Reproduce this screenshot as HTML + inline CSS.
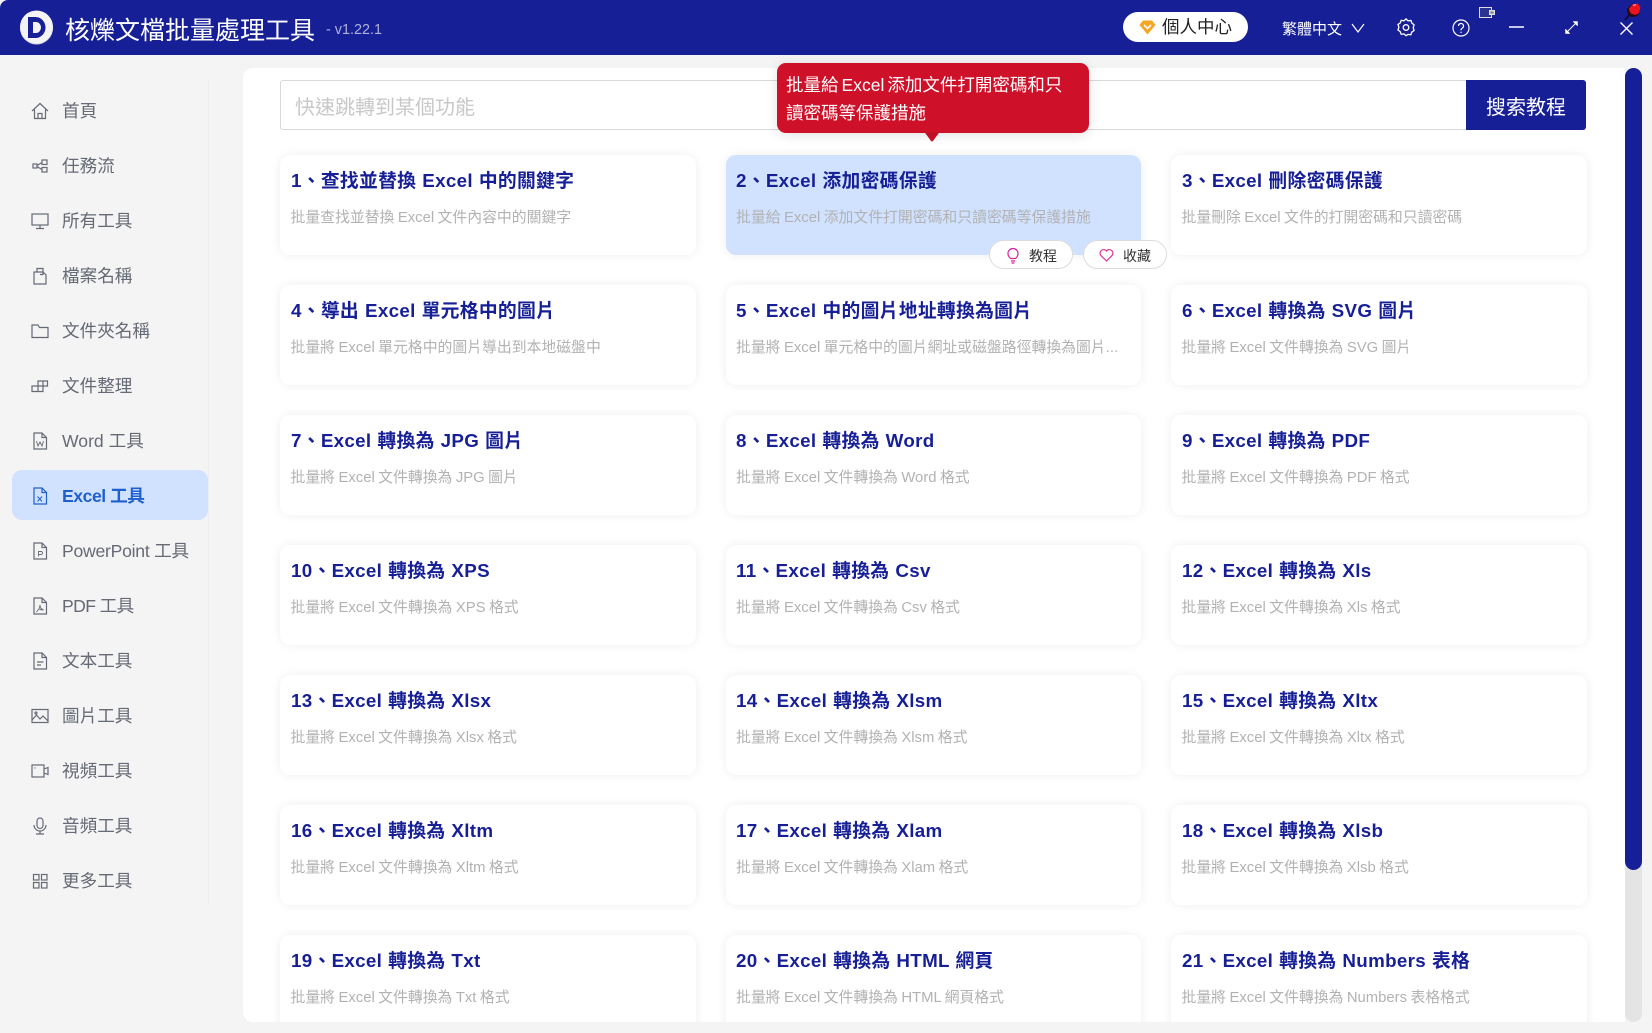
<!DOCTYPE html>
<html lang="zh-Hant"><head><meta charset="utf-8"><title>核爍文檔批量處理工具</title>
<style>
*{box-sizing:border-box;margin:0;padding:0}
html,body{width:1652px;height:1033px;overflow:hidden;background:#f4f4f4}
body{position:relative;font-family:"Liberation Sans","Noto Sans CJK TC",sans-serif}
.a{position:absolute;white-space:nowrap}
#hd{left:0;top:0;width:1652px;height:55px;background:#171f96;border-top-left-radius:8px}
.s{position:absolute;left:62px;height:50px;line-height:52px;font-size:17.6px;color:#666a75;white-space:nowrap}
.i{position:absolute;left:31px;width:18px;height:18px;margin-top:1px;fill:none;stroke:#666a75;stroke-width:1.2}
#act{position:absolute;left:12px;top:470px;width:196px;height:50px;background:#d0e2ff;border-radius:10px}
#panel{position:absolute;left:243px;top:68px;width:1382px;height:954px;background:#fff;border-radius:10px 0 0 10px;overflow:hidden}
.c{position:absolute;width:416px;height:100px;background:#fff;border-radius:10px;box-shadow:0 0 10px rgba(0,0,0,.07)}
.c b{position:absolute;left:11px;top:12px;line-height:28px;font-size:18.8px;font-weight:700;letter-spacing:.3px;word-spacing:.5px;color:#171f96;white-space:nowrap}
.c span{position:absolute;left:10.5px;top:51px;line-height:24px;font-size:14.85px;word-spacing:-.7px;color:#b2b2b2;white-space:nowrap}
.m{left:482.5px;width:415.5px}
.m b{left:10.5px}
.p{position:absolute;top:240px;height:29px;width:84px;background:#fff;border:1px solid #dcdcdc;border-radius:15px;font-size:14px;line-height:30px;color:#333}
.p span{position:absolute;left:39px;top:0}
</style></head><body>

<div class="a" id="hd"></div>
<svg class="a" style="left:20px;top:10px" width="34" height="35" viewBox="0 0 34 35"><circle cx="16.5" cy="18" r="16.5" fill="#d5d6e2"/><circle cx="16.5" cy="17" r="16.5" fill="#f3f3f6"/><path fill-rule="evenodd" d="M8 7h7.500a10 10.500 0 0 1 0 21H8zM13 12v11h3a5 5.500 0 0 0 0-11z" fill="#171f96"/></svg>
<div class="a" style="left:65px;top:14px;font-size:25px;line-height:35px;color:#fff">核爍文檔批量處理工具</div>
<div class="a" style="left:326px;top:20px;font-size:14.4px;line-height:21px;color:#aeb2d8">- v1.22.1</div>

<div class="a" style="left:1123px;top:12px;width:125px;height:30px;background:#fff;border-radius:15px"></div>
<svg class="a" style="left:1139px;top:20px" width="17" height="15" viewBox="0 0 17 15"><path d="M4 .5h9l3.5 4.5-8 9.5-8-9.5z" fill="#f5a623"/><path d="M5 5l3.5 3.5L12 5" fill="none" stroke="#fff" stroke-width="1.6"/></svg>
<div class="a" style="left:1162px;top:14px;font-size:17.5px;line-height:27px;color:#222">個人中心</div>
<div class="a" style="left:1282px;top:18px;font-size:15px;line-height:23px;color:#fff">繁體中文</div>
<svg class="a" style="left:1351px;top:23px" width="14" height="10" viewBox="0 0 14 10" fill="none" stroke="#fff" stroke-width="1.2"><path d="M1 1l6 8 6-8"/></svg>
<svg class="a" style="left:1397px;top:18px" width="18" height="19" viewBox="0 0 18 19" fill="none" stroke="#fff" stroke-width="1.3"><path d="M9 1.2l2 1.9 2.9-.3 1 2.6 2.2 1.8-.9 2.8.9 2.8-2.3 1.6-1 2.7-2.8-.4L9 18l-2-1.8-2.8.4-1-2.7L1 12.300l.9-2.800L1 6.700l2.200-1.400 1-2.600 2.800.4z" transform="translate(0 -.3)"/><circle cx="9" cy="9.500" r="2.800"/></svg>
<svg class="a" style="left:1452px;top:19px" width="18" height="18" viewBox="0 0 18 18" fill="none" stroke="#fff" stroke-width="1.2"><circle cx="9" cy="9" r="8"/><path d="M6.500 7a2.500 2.500 0 1 1 3.800 2.100C9.400 9.700 9 10.200 9 11.200"/><path d="M9 12.700v1.300"/></svg>
<svg class="a" style="left:1479px;top:7px" width="16" height="11" viewBox="0 0 16 11"><rect x=".5" y=".5" width="12" height="10" fill="#2b3390" stroke="#ddd"/><rect x="10" y="3" width="6" height="5" fill="#ddd"/><rect x="11.500" y="4.500" width="3" height="2" fill="#777"/></svg>
<div class="a" style="left:1509px;top:26px;width:15px;height:2px;background:#c6c9e6"></div>
<svg class="a" style="left:1564px;top:20px" width="15" height="15" viewBox="0 0 15 15" fill="#fff" stroke="#fff"><path d="M3 12l9-9" stroke-width="1"/><path d="M9 1.500h4.500V6zM1.500 9V13.500H6z" stroke-width=".5"/></svg>
<svg class="a" style="left:1620px;top:22px" width="13" height="13" viewBox="0 0 13 13" fill="none" stroke="#fff" stroke-width="1.400"><path d="M.5.500l12 12M12.500.500l-12 12"/></svg>
<svg class="a" style="left:1622px;top:1px" width="20" height="21" viewBox="0 0 20 21"><path d="M3 19l5-6" stroke="#0c0c20" stroke-width="1.600"/><path d="M5 8l4-4 8 1 1 7-4 3.500-5 .5-3.500-3z" fill="#2a0810"/><path d="M7 7.500l3.500-4 5.500-1 2.500 4-1.500 5.500-4 2-4-1.500-1.500-2.500z" fill="#ec1420"/><path d="M11 4.500l3-1" stroke="#ff9a9a" stroke-width="1.200"/></svg>

<div class="a" style="left:208px;top:80px;width:1px;height:825px;background:#eeeeee"></div>
<div id="act"></div>

<svg class="i" style="top:101px" viewBox="0 0 18 18"><path d="M1 9l8-7.500L17 9M3.500 7.500V16.500h11V7.500M7 16.500v-5h4v5"/></svg><div class="s" style="top:85px">首頁</div>
<svg class="i" style="top:156px" viewBox="0 0 18 18"><rect x="2" y="7" width="4" height="4"/><rect x="11" y="3" width="5" height="4.500"/><rect x="11" y="10.500" width="5" height="4.500"/><path d="M6 8.500l5-3M6 9.500l5 3"/></svg><div class="s" style="top:140px">任務流</div>
<svg class="i" style="top:211px" viewBox="0 0 18 18"><rect x="1" y="2" width="16" height="11"/><path d="M9 13v3M5 16.500h8"/></svg><div class="s" style="top:195px">所有工具</div>
<svg class="i" style="top:266px" viewBox="0 0 18 18"><path d="M3 5h9l3 3v9H3zM6 5V1.500h6v6H9"/></svg><div class="s" style="top:250px">檔案名稱</div>
<svg class="i" style="top:321px" viewBox="0 0 18 18"><path d="M1 3h6l1.500 2.500H17V15.500H1z"/></svg><div class="s" style="top:305px">文件夾名稱</div>
<svg class="i" style="top:376px" viewBox="0 0 18 18"><path d="M1 9h6v5.500H1zM7 14.500h5V9H7M7 9V4h9.500v5H12M12 4v5"/></svg><div class="s" style="top:360px">文件整理</div>
<svg class="i" style="top:431px" viewBox="0 0 18 18"><path d="M3 1h8l4.500 4.500V17H3zM11 1v4.500h4.500"/><path d="M5.500 9l1.500 5 2-4 2 4 1.500-5" stroke-width=".9"/></svg><div class="s" style="top:415px">Word 工具</div>
<svg class="i" style="top:486px;stroke:#2060cc" viewBox="0 0 18 18"><path d="M3 1h8l4.500 4.500V17H3zM11 1v4.500h4.500"/><path d="M6.500 9.500l4.500 5M11 9.500l-4.500 5" stroke-width="1"/></svg><div class="s" style="top:470px;color:#2060cc;font-weight:700;letter-spacing:-.45px">Excel 工具</div>
<svg class="i" style="top:541px" viewBox="0 0 18 18"><path d="M3 1h8l4.500 4.500V17H3zM11 1v4.500h4.500"/><path d="M7.500 14.500V9.500h2.500a1.500 1.500 0 0 1 0 3H7.500" stroke-width=".9"/></svg><div class="s" style="top:525px;letter-spacing:-.25px">PowerPoint 工具</div>
<svg class="i" style="top:596px" viewBox="0 0 18 18"><path d="M3 1h8l4.500 4.500V17H3zM11 1v4.500h4.500"/><path d="M5.500 15l3-4 .5-3 .5 3 3 2-4-.5" stroke-width=".9"/></svg><div class="s" style="top:580px;letter-spacing:-.6px">PDF 工具</div>
<svg class="i" style="top:651px" viewBox="0 0 18 18"><path d="M3 1h8l4.500 4.500V17H3zM11 1v4.500h4.500M6 10h6.500M6 13h4"/></svg><div class="s" style="top:635px">文本工具</div>
<svg class="i" style="top:706px" viewBox="0 0 18 18"><rect x="1" y="2.500" width="16" height="13"/><path d="M1 13l4.500-5 3.500 4 3-3 5 5"/><circle cx="5" cy="6" r="1"/></svg><div class="s" style="top:690px">圖片工具</div>
<svg class="i" style="top:761px" viewBox="0 0 18 18"><rect x="1" y="3" width="12" height="12"/><path d="M13 7l4-1.500v7L13 11"/><path d="M3.500 6h1"/></svg><div class="s" style="top:745px">視頻工具</div>
<svg class="i" style="top:816px" viewBox="0 0 18 18"><rect x="6" y="1" width="6" height="10.500" rx="3"/><path d="M3 8a6 6 0 0 0 12 0M9 14v3M5 17h8"/></svg><div class="s" style="top:800px">音頻工具</div>
<svg class="i" style="top:871px" viewBox="0 0 18 18"><rect x="2.500" y="2.500" width="5.500" height="5.500"/><rect x="10.500" y="2.500" width="5.500" height="5.500"/><rect x="2.500" y="10.500" width="5.500" height="5.500"/><rect x="10.500" y="10.500" width="5.500" height="5.500"/></svg><div class="s" style="top:855px">更多工具</div>

<div id="panel">
<div class="a" style="left:37px;top:12px;width:1190px;height:50px;border:1px solid #d9d9d9;border-right:0;border-radius:3px 0 0 3px;padding-left:14px;line-height:54px;font-size:20px;color:#c8c8c8">快速跳轉到某個功能</div>
<div class="a" style="left:1223px;top:12px;width:120px;height:50px;background:#171f96;border-radius:0 3px 3px 0;text-align:center;line-height:56px;font-size:20px;color:#fff">搜索教程</div>

<div class="c" style="left:37px;top:87px"><b>1、查找並替換 Excel 中的關鍵字</b><span>批量查找並替換 Excel 文件內容中的關鍵字</span></div>
<div class="c m" style="top:87px;background:#d0e2ff"><b>2、Excel 添加密碼保護</b><span>批量給 Excel 添加文件打開密碼和只讀密碼等保護措施</span></div>
<div class="c" style="left:928px;top:87px"><b>3、Excel 刪除密碼保護</b><span>批量刪除 Excel 文件的打開密碼和只讀密碼</span></div>
<div class="c" style="left:37px;top:217px"><b>4、導出 Excel 單元格中的圖片</b><span>批量將 Excel 單元格中的圖片導出到本地磁盤中</span></div>
<div class="c m" style="top:217px"><b>5、Excel 中的圖片地址轉換為圖片</b><span>批量將 Excel 單元格中的圖片網址或磁盤路徑轉換為圖片...</span></div>
<div class="c" style="left:928px;top:217px"><b>6、Excel 轉換為 SVG 圖片</b><span>批量將 Excel 文件轉換為 SVG 圖片</span></div>
<div class="c" style="left:37px;top:347px"><b>7、Excel 轉換為 JPG 圖片</b><span>批量將 Excel 文件轉換為 JPG 圖片</span></div>
<div class="c m" style="top:347px"><b>8、Excel 轉換為 Word</b><span>批量將 Excel 文件轉換為 Word 格式</span></div>
<div class="c" style="left:928px;top:347px"><b>9、Excel 轉換為 PDF</b><span>批量將 Excel 文件轉換為 PDF 格式</span></div>
<div class="c" style="left:37px;top:477px"><b>10、Excel 轉換為 XPS</b><span>批量將 Excel 文件轉換為 XPS 格式</span></div>
<div class="c m" style="top:477px"><b>11、Excel 轉換為 Csv</b><span>批量將 Excel 文件轉換為 Csv 格式</span></div>
<div class="c" style="left:928px;top:477px"><b>12、Excel 轉換為 Xls</b><span>批量將 Excel 文件轉換為 Xls 格式</span></div>
<div class="c" style="left:37px;top:607px"><b>13、Excel 轉換為 Xlsx</b><span>批量將 Excel 文件轉換為 Xlsx 格式</span></div>
<div class="c m" style="top:607px"><b>14、Excel 轉換為 Xlsm</b><span>批量將 Excel 文件轉換為 Xlsm 格式</span></div>
<div class="c" style="left:928px;top:607px"><b>15、Excel 轉換為 Xltx</b><span>批量將 Excel 文件轉換為 Xltx 格式</span></div>
<div class="c" style="left:37px;top:737px"><b>16、Excel 轉換為 Xltm</b><span>批量將 Excel 文件轉換為 Xltm 格式</span></div>
<div class="c m" style="top:737px"><b>17、Excel 轉換為 Xlam</b><span>批量將 Excel 文件轉換為 Xlam 格式</span></div>
<div class="c" style="left:928px;top:737px"><b>18、Excel 轉換為 Xlsb</b><span>批量將 Excel 文件轉換為 Xlsb 格式</span></div>
<div class="c" style="left:37px;top:867px"><b>19、Excel 轉換為 Txt</b><span>批量將 Excel 文件轉換為 Txt 格式</span></div>
<div class="c m" style="top:867px"><b>20、Excel 轉換為 HTML 網頁</b><span>批量將 Excel 文件轉換為 HTML 網頁格式</span></div>
<div class="c" style="left:928px;top:867px"><b>21、Excel 轉換為 Numbers 表格</b><span>批量將 Excel 文件轉換為 Numbers 表格格式</span></div>
</div>

<div class="a" style="left:1625px;top:68px;width:17px;height:954px;background:#e4e4e4;border-radius:9px"></div>
<div class="a" style="left:1625px;top:68px;width:17px;height:802px;background:#171f96;border-radius:9px"></div>

<div class="p" style="left:989px"><svg class="a" style="left:16px;top:6px" width="14" height="17" viewBox="0 0 14 17" fill="none" stroke="#d6249f" stroke-width="1.200"><path d="M4.500 11.500C3 10 2 9 2 6.500a5 5 0 0 1 10 0c0 2.500-1 3.500-2.500 5z"/><path d="M5 14h4M5.500 16h3"/></svg><span>教程</span></div>
<div class="p" style="left:1083px"><svg class="a" style="left:15px;top:7px" width="15" height="14" viewBox="0 0 15 14" fill="none" stroke="#e0359b" stroke-width="1.200"><path d="M7.500 13L1.800 7.300A3.500 3.500 0 0 1 7.500 3a3.500 3.500 0 0 1 5.700 4.300z"/></svg><span>收藏</span></div>

<svg class="a" style="left:923px;top:130px" width="18" height="12" viewBox="0 0 18 12"><path d="M0 0h18L10 11q-1 1-2 0z" fill="#cf1029"/></svg>
<div class="a" style="left:777px;top:63px;width:312px;height:70px;background:#cf1029;border-radius:9px;padding:8px 9px;font-size:17.500px;line-height:28px;word-spacing:-1.8px;color:#fff;white-space:normal;box-shadow:0 2px 12px rgba(0,0,0,.12)">批量給 Excel 添加文件打開密碼和只<br>讀密碼等保護措施</div>

</body></html>
